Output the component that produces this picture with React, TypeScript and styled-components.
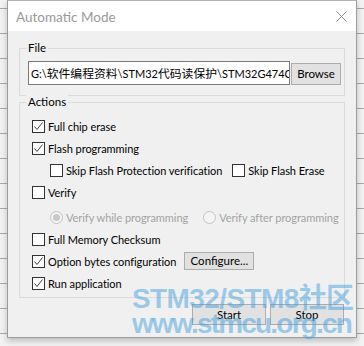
import React from "react";
import styled, { createGlobalStyle } from "styled-components";

const Global = createGlobalStyle`
  html, body { margin: 0; padding: 0; }
  body {
    width: 364px;
    height: 346px;
    overflow: hidden;
    background-color: #f2f2f2;
    background-image: repeating-linear-gradient(
      to bottom,
      transparent 0px,
      transparent 8px,
      #a9a9a9 8px,
      #a9a9a9 9px,
      transparent 9px,
      transparent 25px
    );
    font-family: Lato, "Noto Sans CJK SC", sans-serif;
  }
`;

const Window = styled.div`
  position: relative;
  margin-left: 7px;
  width: 350px;
  height: 338px;
  box-sizing: border-box;
  border: 1px solid #9c9c9c;
  border-top-color: #b5b5b5;
  background: #f0f0f0;
  box-shadow: 0 3px 6px rgba(0, 0, 0, 0.22);
  display: flex;
  flex-direction: column;
`;

const TitleBar = styled.div`
  height: 30px;
  background: #ffffff;
  display: flex;
  align-items: center;
  justify-content: space-between;
  padding: 0 9px 0 8px;
`;

const Title = styled.span`
  font-size: 13.5px;
  color: #9a9a9a;
  margin-top: 1px;
`;

const Body = styled.div`
  flex: 1;
  padding: 17px 11px 0 11px;
  display: flex;
  flex-direction: column;
`;

const Group = styled.div<{ $mt?: number }>`
  position: relative;
  border: 1px solid #dcdcdc;
  margin-top: ${(p) => p.$mt ?? 0}px;
`;

const Legend = styled.span`
  position: absolute;
  top: -9px;
  left: 6px;
  padding: 0 2px;
  background: #f0f0f0;
  font-size: 11.5px;
  line-height: 16px;
  color: #000;
`;

const FileRow = styled.div`
  display: flex;
  align-items: flex-end;
  gap: 1px;
  padding: 12px 3px 10px 8px;
`;

const PathInput = styled.div`
  width: 262px;
  height: 24px;
  box-sizing: border-box;
  border: 1px solid #7a7a7a;
  background: #fff;
  padding: 0 2px;
  font-size: 11px;
  line-height: 22px;
  white-space: nowrap;
  overflow: hidden;
  color: #000;
`;

const Cjk = styled.span`
  font-family: "Noto Sans CJK SC", sans-serif;
  font-size: 11.8px;
`;

const Button = styled.button<{ $w: number; $h: number }>`
  width: ${(p) => p.$w}px;
  height: ${(p) => p.$h}px;
  box-sizing: border-box;
  border: 1px solid #adadad;
  background: #e1e1e1;
  font-family: Lato, sans-serif;
  font-size: 11.5px;
  color: #000;
  padding: 0;
  line-height: 1;
  display: flex;
  align-items: center;
  justify-content: center;
`;

const Actions = styled.div`
  display: flex;
  flex-direction: column;
  padding: 12px 12px 3px 12px;
`;

const Row = styled.div<{ $indent?: number; $mt?: number }>`
  height: 22px;
  display: flex;
  align-items: center;
  padding-left: ${(p) => p.$indent ?? 0}px;
  margin-top: ${(p) => p.$mt ?? 0}px;
`;

const Item = styled.label<{ $ml?: number; $disabled?: boolean }>`
  display: flex;
  align-items: center;
  gap: 3px;
  margin-left: ${(p) => p.$ml ?? 0}px;
  font-size: 11px;
  letter-spacing: -0.05px;
  color: ${(p) => (p.$disabled ? "#a3a3a3" : "#000")};
  white-space: nowrap;
`;

const Box = styled.span`
  width: 13px;
  height: 13px;
  box-sizing: border-box;
  border: 1px solid #333333;
  background: #fff;
  display: flex;
  align-items: center;
  justify-content: center;
  flex: none;
`;

const Radio = styled.span<{ $on?: boolean }>`
  width: 13px;
  height: 13px;
  box-sizing: border-box;
  border-radius: 50%;
  border: 1px solid #c4c4c4;
  background: #f4f4f4;
  display: flex;
  align-items: center;
  justify-content: center;
  flex: none;
  &::after {
    content: "";
    display: ${(p) => (p.$on ? "block" : "none")};
    width: 7px;
    height: 7px;
    border-radius: 50%;
    background: #c8c8c8;
  }
`;

const ButtonBar = styled.div`
  display: flex;
  justify-content: flex-end;
  gap: 4px;
  padding-right: 1px;
  margin-top: 6px;
`;

const Watermark = styled.div`
  position: absolute;
  left: 124px;
  top: 285px;
  pointer-events: none;
  font-family: "Liberation Sans", "Noto Sans CJK SC", sans-serif;
  font-weight: 700;
  font-size: 28px;
  line-height: 25px;
  color: rgba(70, 160, 222, 0.5);
  white-space: nowrap;
`;

const WmLine = styled.div<{ $ls: number }>`
  letter-spacing: ${(p) => p.$ls}px;
`;

const Check = () => (
  <svg width="11" height="11" viewBox="0 0 11 11">
    <polyline points="1.5,5.5 4,8.5 9.5,1.5" fill="none" stroke="#444" strokeWidth="1" />
  </svg>
);

const CheckItem: React.FC<{ label: string; checked?: boolean; ml?: number }> = ({ label, checked, ml }) => (
  <Item $ml={ml}>
    <Box>{checked && <Check />}</Box>
    {label}
  </Item>
);

const RadioItem: React.FC<{ label: string; on?: boolean; ml?: number }> = ({ label, on, ml }) => (
  <Item $ml={ml} $disabled>
    <Radio $on={on} />
    {label}
  </Item>
);

export default function App() {
  return (
    <>
      <Global />
      <Window>
        <TitleBar>
          <Title>Automatic Mode</Title>
          <svg width="11" height="11" viewBox="0 0 11 11">
            <path d="M0.5 0.5 L10.5 10.5 M10.5 0.5 L0.5 10.5" stroke="#8a8a8a" strokeWidth="1" />
          </svg>
        </TitleBar>
        <Body>
          <Group>
            <Legend>File</Legend>
            <FileRow>
              <PathInput>
                G:\<Cjk>软件编程资料</Cjk>\STM32<Cjk>代码读保护</Cjk>\STM32G474CEU6.hex
              </PathInput>
              <Button $w={50} $h={22}>Browse</Button>
            </FileRow>
          </Group>
          <Group $mt={6}>
            <Legend>Actions</Legend>
            <Actions>
              <Row><CheckItem label="Full chip erase" checked /></Row>
              <Row><CheckItem label="Flash programming" checked /></Row>
              <Row $indent={18}>
                <CheckItem label="Skip Flash Protection verification" />
                <CheckItem label="Skip Flash Erase" ml={10} />
              </Row>
              <Row><CheckItem label="Verify" /></Row>
              <Row $indent={18} $mt={3}>
                <RadioItem label="Verify while programming" on />
                <RadioItem label="Verify after programming" ml={15} />
              </Row>
              <Row><CheckItem label="Full Memory Checksum" /></Row>
              <Row>
                <CheckItem label="Option bytes configuration" checked />
                <Button $w={70} $h={18} style={{ marginLeft: 8 }}>Configure...</Button>
              </Row>
              <Row><CheckItem label="Run application" checked /></Row>
            </Actions>
          </Group>
          <ButtonBar>
            <Button $w={74} $h={21}>Start</Button>
            <Button $w={74} $h={21}>Stop</Button>
          </ButtonBar>
        </Body>
        <Watermark>
          <WmLine $ls={-0.6}>STM32/STM8社区</WmLine>
          <WmLine $ls={-1.8}>www.stmcu.org.cn</WmLine>
        </Watermark>
      </Window>
    </>
  );
}
